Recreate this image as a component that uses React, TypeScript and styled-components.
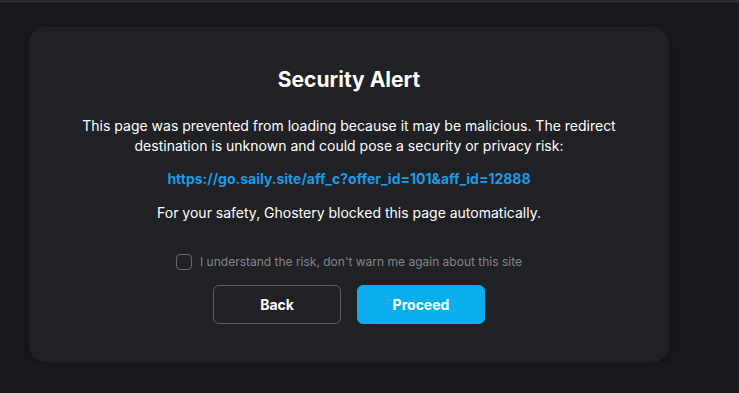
import React from "react";
import styled, { createGlobalStyle } from "styled-components";

const Global = createGlobalStyle`
  html, body { margin: 0; padding: 0; background: #18191c; }
  body { font-family: Inter, "Noto Sans", sans-serif; color: #ffffff; }
  * { box-sizing: border-box; }
`;

const TopStrip = styled.div`
  height: 4px;
  background: #2b2a33;
  border-bottom: 1px solid #0f0f12;
`;

const Page = styled.div`
  padding: 23px 0 0 29px;
`;

const Card = styled.div`
  width: 640px;
  height: 335px;
  background: #202124;
  border-radius: 16px;
  box-shadow: 0 6px 16px rgba(0, 0, 0, 0.25);
  padding: 39px 40px 0;
  display: flex;
  flex-direction: column;
  align-items: center;
  text-align: center;
`;

const Title = styled.h1`
  margin: 0;
  font-size: 21px;
  line-height: 28px;
  font-weight: 700;
  color: #ffffff;
`;

const Text = styled.p<{ $mt: number }>`
  margin: ${(p) => p.$mt}px 0 0;
  font-size: 14px;
  line-height: 20px;
  font-weight: 400;
  color: #ffffff;
`;

const Link = styled.a`
  margin-top: 13px;
  font-size: 14px;
  line-height: 20px;
  font-weight: 700;
  color: #1c9ae5;
  text-decoration: none;
`;

const CheckRow = styled.label`
  margin-top: 29px;
  display: flex;
  align-items: center;
  gap: 8px;
  font-size: 12px;
  line-height: 20px;
  color: #85868c;
`;

const Box = styled.span`
  width: 16px;
  height: 16px;
  border: 1px solid #66676c;
  border-radius: 4px;
`;

const Buttons = styled.div`
  margin-top: 13px;
  display: flex;
  gap: 16px;
`;

const Button = styled.button<{ $primary?: boolean }>`
  width: 128px;
  height: 39px;
  border-radius: 6px;
  font-family: Inter, "Noto Sans", sans-serif;
  font-size: 14px;
  font-weight: 700;
  color: #ffffff;
  cursor: pointer;
  background: ${(p) => (p.$primary ? "#0aaeef" : "transparent")};
  border: 1px solid ${(p) => (p.$primary ? "#0aaeef" : "#5e5f64")};
`;

export default function App() {
  return (
    <>
      <Global />
      <TopStrip />
      <Page>
        <Card>
          <Title>Security Alert</Title>
          <Text $mt={22}>
            This page was prevented from loading because it may be malicious. The redirect
            destination is unknown and could pose a security or privacy risk:
          </Text>
          <Link href="#">https://go.saily.site/aff_c?offer_id=101&amp;aff_id=12888</Link>
          <Text $mt={14}>For your safety, Ghostery blocked this page automatically.</Text>
          <CheckRow>
            <Box />
            I understand the risk, don't warn me again about this site
          </CheckRow>
          <Buttons>
            <Button>Back</Button>
            <Button $primary>Proceed</Button>
          </Buttons>
        </Card>
      </Page>
    </>
  );
}
